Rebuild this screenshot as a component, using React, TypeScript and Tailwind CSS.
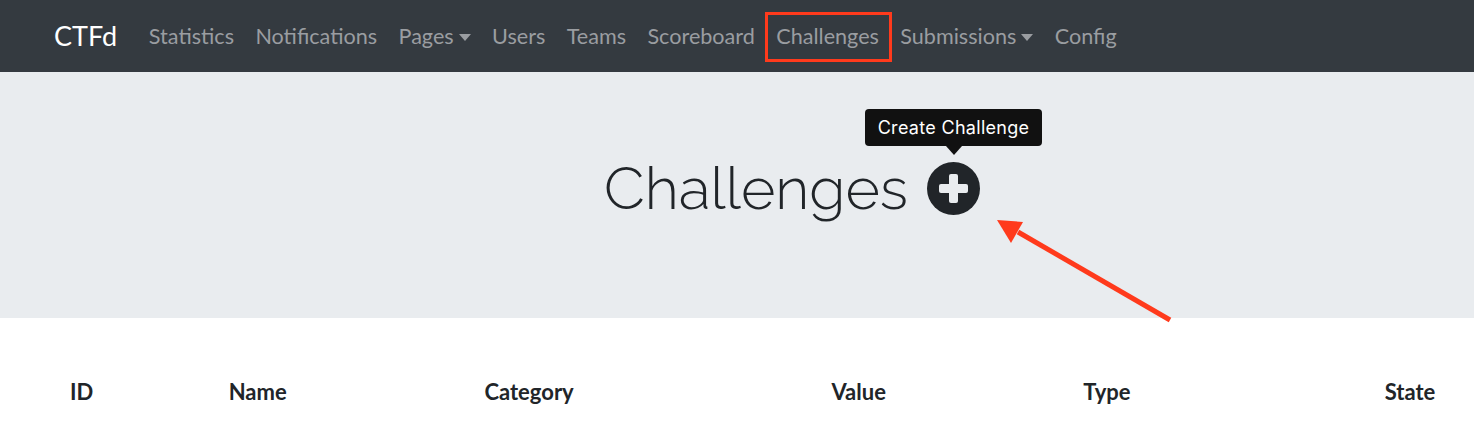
import { ReactNode } from "react";

interface NavItem {
  title: string;
  dropdown?: boolean;
  marked?: boolean;
}

const navItems: NavItem[] = [
  { title: "Statistics" },
  { title: "Notifications" },
  { title: "Pages", dropdown: true },
  { title: "Users" },
  { title: "Teams" },
  { title: "Scoreboard" },
  { title: "Challenges", marked: true },
  { title: "Submissions", dropdown: true },
  { title: "Config" },
];

const columns = [
  { title: "ID", width: "w-[160px]" },
  { title: "Name", width: "w-[258px]" },
  { title: "Category", width: "w-[350px]" },
  { title: "Value", width: "w-[254px]" },
  { title: "Type", width: "w-[304px]" },
  { title: "State", width: "w-[90px]" },
];

function Caret() {
  return (
    <svg width="12" height="7" viewBox="0 0 12 7" className="ml-[5px] mt-[1px]">
      <path d="M0 0 L12 0 L6 7 Z" fill="currentColor" />
    </svg>
  );
}

function NavLink({ item }: { item: NavItem }): ReactNode {
  return (
    <div className="relative flex items-center h-[26px] px-[10.7px] text-[21.6px] leading-none text-[#9a9da1]">
      <span>{item.title}</span>
      {item.dropdown && <Caret />}
      {/* red highlight box */}
      {item.marked && (
        <div className="absolute left-[-1px] right-[-2px] top-[-12px] bottom-[-12px] border-[3px] border-[#ff3a1c]" />
      )}
    </div>
  );
}

export default function App() {
  return (
    <div className="w-[1474px] h-[448px] overflow-hidden bg-white font-['Lato','Liberation_Sans',sans-serif] relative">
      {/* navbar */}
      <nav className="h-[72px] bg-[#343a40] flex items-center pl-[54px] pt-[2px]">
        <span className="text-white text-[27px] mr-[21px] leading-none pb-[3px]">CTFd</span>
        <div className="flex items-center">
          {navItems.map((item, key) => (
            <NavLink key={key} item={item} />
          ))}
        </div>
      </nav>

      {/* jumbotron */}
      <div className="h-[246px] bg-[#e9ecef] flex justify-center pt-[87px]">
        <div className="flex items-start ml-[110px]">
          <h1 className="text-[59px] leading-none font-light text-[#212529] font-['Raleway','Lato',sans-serif]">
            Challenges
          </h1>
          <div className="relative ml-[19px] mt-[3px]">
            <svg width="53" height="53" viewBox="0 0 53 53">
              <circle cx="26.5" cy="26.5" r="26.5" fill="#212529" />
              <rect x="22" y="12" width="9" height="29" rx="2" fill="#e9ecef" />
              <rect x="12" y="22" width="29" height="9" rx="2" fill="#e9ecef" />
            </svg>
            {/* tooltip */}
            <div className="absolute left-[-62px] top-[-53px] flex flex-col items-center">
              <div className="bg-[#111] text-white rounded-[4px] h-[37px] w-[177px] flex items-center justify-center text-[18px] font-['Inter',sans-serif] tracking-[0.3px]">
                Create Challenge
              </div>
              <div className="w-0 h-0 border-l-[8px] border-r-[8px] border-t-[9px] border-l-transparent border-r-transparent border-t-[#111]" />
            </div>
          </div>
        </div>
      </div>

      {/* table header */}
      <div className="flex pl-[70px] pt-[63px] text-[22px] leading-none font-bold text-[#212529]">
        {columns.map((col, key) => (
          <div key={key} className={col.width}>
            {col.title}
          </div>
        ))}
      </div>

      {/* red arrow annotation */}
      <svg className="absolute left-0 top-0 pointer-events-none" width="1474" height="448">
        <line x1="1170" y1="320" x2="1018" y2="232" stroke="#ff3a1c" strokeWidth="5" />
        <polygon points="997,220 1023,222 1011,243" fill="#ff3a1c" />
      </svg>
    </div>
  );
}
